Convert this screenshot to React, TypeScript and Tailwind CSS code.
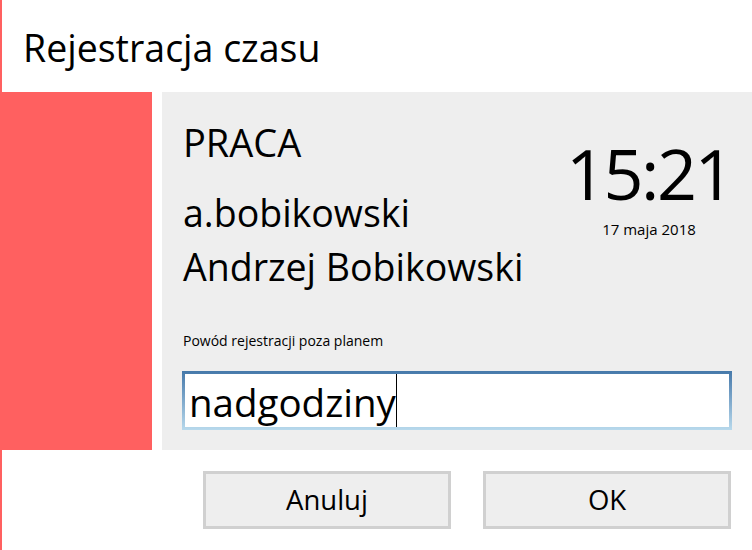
export default function App() {
  const font = { fontFamily: '"Open Sans", "Noto Sans", sans-serif' };

  return (
    <div
      className="w-[752px] h-[550px] bg-white border-l-2 border-[#ff6060] flex flex-col text-black overflow-hidden"
      style={font}
    >
      {/* Title bar */}
      <div className="h-[92px] pl-[21px] pt-[26px]">
        <h1 className="text-[37.5px] leading-[44px]">Rejestracja czasu</h1>
      </div>

      {/* Main row: status colour + details panel */}
      <div className="h-[358px] flex gap-[10px]">
        <div className="w-[150px] bg-[#ff6060]" />
        <div className="flex-1 bg-[#eeeeee] px-[20px] flex flex-col">
          <div className="flex justify-between">
            <div className="pl-px pt-[28px]">
              <div className="text-[38px] leading-[44px]">PRACA</div>
              <div className="mt-[22px] text-[37.5px] leading-[54px]">a.bobikowski</div>
              <div className="text-[37.5px] leading-[54px]">Andrzej Bobikowski</div>
            </div>
            <div className="pt-[50px] flex flex-col items-center">
              <div className="text-[70px] leading-[62px] tracking-[-2.5px]">15:21</div>
              <div className="mt-[16px] text-[15px] leading-[18px]">17 maja 2018</div>
            </div>
          </div>

          <div className="mt-[39px] pl-px text-[14px] leading-[16px]">
            Powód rejestracji poza planem
          </div>

          <div className="mt-[22px] h-[59px] p-[3px] bg-gradient-to-b from-[#4679aa] to-[#b8d9ec]">
            <div className="h-full bg-white flex pl-[4px]">
              <span className="text-[38.5px] leading-[53px] pt-[2px]">nadgodziny</span>
              <span className="w-px self-stretch bg-black" />
            </div>
          </div>
        </div>
      </div>

      {/* Buttons */}
      <div className="flex-1 flex justify-end gap-[32px] pt-[21px] pr-[21px]">
        <button className="w-[248px] h-[58px] border-[3px] border-[#d0d0d0] bg-[#eeeeee] text-[27.5px] leading-none">
          Anuluj
        </button>
        <button className="w-[248px] h-[58px] border-[3px] border-[#d0d0d0] bg-[#eeeeee] text-[27.5px] leading-none">
          OK
        </button>
      </div>
    </div>
  );
}
